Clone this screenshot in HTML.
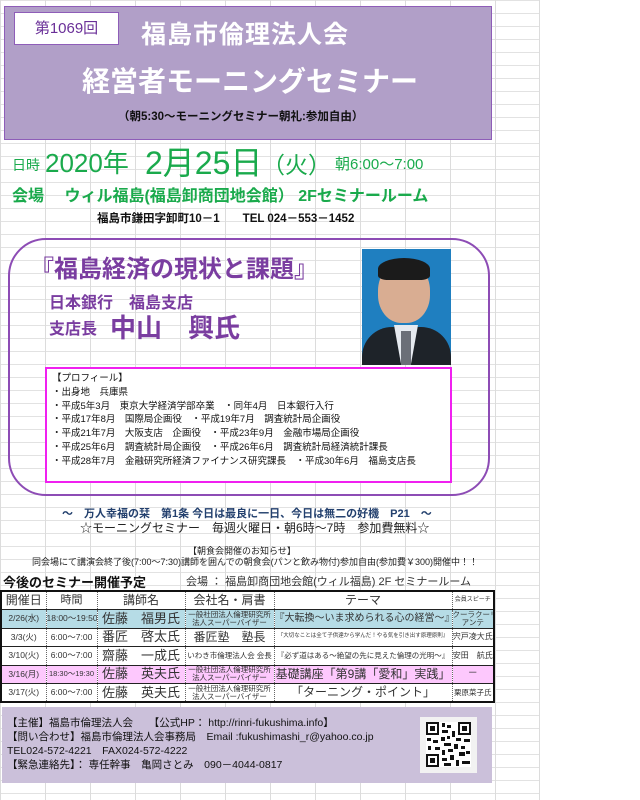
<!DOCTYPE html>
<html><head><meta charset="utf-8">
<style>
*{margin:0;padding:0;box-sizing:border-box}
body{width:640px;height:800px;position:relative;overflow:hidden;background:#fff;font-family:"Liberation Sans","Noto Sans CJK JP",sans-serif;}
.grid{position:absolute;left:0;top:0;width:540px;height:800px;
background-image:linear-gradient(to right,#dcdcdc 1px,transparent 1px),linear-gradient(to bottom,#e2e2e2 1px,transparent 1px);
background-size:45px 100%,100% 13px;border-right:1px solid #dcdcdc}
.a{position:absolute;white-space:nowrap}
.g{color:#1aaa4c}
.p{color:#7a3da0;font-weight:bold}
table{position:absolute;left:0;top:590px;width:493px;table-layout:fixed;border-collapse:collapse;border:2px solid #111;font-size:10px;color:#333;background:#fff}
td{border-left:1px dotted #666;border-bottom:1px solid #222;text-align:center;height:18.5px;line-height:1.05;padding:0;overflow:hidden;white-space:nowrap}
td.s{font-size:7.5px}
td.n{font-size:13px}
</style></head><body>
<div class="grid"></div>

<div class="a" style="left:4px;top:6px;width:488px;height:134px;background:#b19fc8;border:1px solid #8e5db8"></div>
<div class="a" style="left:14px;top:12px;width:105px;height:33px;background:#fff;border:1px solid #8e5db8;color:#6a2f98;font-size:15px;text-align:center;line-height:31px">第1069回</div>
<div class="a" style="left:141px;top:15px;color:#fff;font-size:25px;font-weight:bold;letter-spacing:1px">福島市倫理法人会</div>
<div class="a" style="left:82px;top:60px;color:#fff;font-size:28px;font-weight:bold">経営者モーニングセミナー</div>
<div class="a" style="left:118px;top:108px;color:#111;font-size:11.5px;font-weight:bold">（朝5:30～モーニングセミナー朝礼:参加自由）</div>

<div class="a g" style="left:12px;top:155px;font-size:14px">日時</div>
<div class="a g" style="left:45px;top:143px;font-size:26px">2020年</div>
<div class="a g" style="left:145px;top:138px;font-size:32px">2月25日</div>
<div class="a g" style="left:262px;top:146px;font-size:23px">（火）</div>
<div class="a g" style="left:335px;top:153px;font-size:15px">朝6:00～7:00</div>
<div class="a g" style="left:12px;top:182px;font-size:16px;font-weight:bold">会場　 ウィル福島(福島卸商団地会館） 2Fセミナールーム</div>
<div class="a" style="left:97px;top:210px;font-size:11.5px;font-weight:bold;color:#111">福島市鎌田字卸町10－1　　TEL 024－553－1452</div>

<div class="a" style="left:8px;top:238px;width:482px;height:258px;border:2px solid #8d4cb5;border-radius:38px"></div>
<div class="a p" style="left:30px;top:249px;font-size:24px">『福島経済の現状と課題』</div>
<div class="a p" style="left:49px;top:289px;font-size:16px">日本銀行　福島支店</div>
<div class="a p" style="left:49px;top:315px;font-size:16px">支店長</div>
<div class="a p" style="left:110px;top:308px;font-size:26px">中山　興氏</div>
<div class="a" style="left:362px;top:249px;width:89px;height:116px;background:#1f7fc0;overflow:hidden">
<div style="position:absolute;left:16px;top:12px;width:52px;height:62px;background:#d9ad92;border-radius:48% 48% 45% 45%"></div>
<div style="position:absolute;left:16px;top:9px;width:52px;height:22px;background:#1b1b1b;border-radius:50% 50% 20% 20%"></div>
<div style="position:absolute;left:0;top:78px;width:89px;height:40px;background:#1e2329;border-radius:30px 30px 0 0"></div>
<div style="position:absolute;left:32px;top:76px;width:24px;height:40px;background:#e6eaf0;clip-path:polygon(0 0,100% 0,70% 100%,30% 100%)"></div>
<div style="position:absolute;left:39px;top:82px;width:10px;height:34px;background:#6b6f78"></div>
</div>
<div class="a" style="left:45px;top:367px;width:407px;height:116px;border:2px solid #f020f0;background:#fff"></div>
<div class="a" style="left:52px;top:372px;font-size:9.5px;line-height:13.8px;color:#111">【プロフィール】<br>・出身地　兵庫県<br>・平成5年3月　東京大学経済学部卒業　・同年4月　日本銀行入行<br>・平成17年8月　国際局企画役　・平成19年7月　調査統計局企画役<br>・平成21年7月　大阪支店　企画役　・平成23年9月　金融市場局企画役<br>・平成25年6月　調査統計局企画役　・平成26年6月　調査統計局経済統計課長<br>・平成28年7月　金融研究所経済ファイナンス研究課長　・平成30年6月　福島支店長</div>

<div class="a" style="left:62px;top:505px;font-size:11px;font-weight:bold;color:#23406e">～　万人幸福の栞　第1条 今日は最良に一日、今日は無二の好機　P21　～</div>
<div class="a" style="left:80px;top:519px;font-size:12px;color:#222">☆モーニングセミナー　毎週火曜日・朝6時～7時　参加費無料☆</div>
<div class="a" style="left:188px;top:544px;font-size:9px;color:#222">【朝食会開催のお知らせ】</div>
<div class="a" style="left:32px;top:555px;font-size:9px;color:#222">同会場にて講演会終了後(7:00～7:30)講師を囲んでの朝食会(パンと飲み物付)参加自由(参加費￥300)開催中！！</div>
<div class="a" style="left:3px;top:576px;font-size:13px;line-height:14px;font-weight:bold;color:#111">今後のセミナー開催予定</div>
<div class="a" style="left:186px;top:576px;font-size:11px;line-height:13px;color:#333">会場 ： 福島卸商団地会館(ウィル福島) 2F セミナールーム</div>

<table>
<colgroup><col style="width:45px"><col style="width:51px"><col style="width:88px"><col style="width:89px"><col style="width:178px"><col style="width:42px"></colgroup>
<tr><td style="font-size:12px;border-left:none">開催日</td><td style="font-size:11px">時間</td><td style="font-size:12px">講師名</td><td style="font-size:12px">会社名・肩書</td><td style="font-size:12px">テーマ</td><td style="font-size:6px">会員スピーチ</td></tr>
<tr style="background:#b6dce6"><td style="border-left:none;font-size:8.5px">2/26(水)</td><td style="font-size:8.5px">18:00～19:50</td><td class="n">佐藤　福男氏</td><td class="s">一般社団法人倫理研究所<br>法人スーパーバイザー</td><td style="font-size:10px">『大転換～いま求められる心の経営～』</td><td class="s">クーラクーリ<br>アンテ</td></tr>
<tr><td style="border-left:none;font-size:8.5px">3/3(火)</td><td style="font-size:8.5px">6:00～7:00</td><td class="n">番匠　啓太氏</td><td style="font-size:12px">番匠塾　塾長</td><td style="font-size:5.5px">『大切なことは全て子供達から学んだ！やる気を引き出す原理原則』</td><td style="font-size:8px">宍戸凌大氏</td></tr>
<tr><td style="border-left:none;font-size:8.5px">3/10(火)</td><td style="font-size:8.5px">6:00～7:00</td><td class="n">齋藤　一成氏</td><td style="font-size:7.5px">いわき市倫理法人会 会長</td><td style="font-size:7.5px">『必ず道はある～絶望の先に見えた倫理の光明～』</td><td style="font-size:8px">安田　航氏</td></tr>
<tr style="background:#fdc8fd"><td style="border-left:none;font-size:8.5px">3/16(月)</td><td style="font-size:7.5px">18:30～19:30</td><td class="n">佐藤　英夫氏</td><td class="s">一般社団法人倫理研究所<br>法人スーパーバイザー</td><td style="font-size:12px">基礎講座「第9講「愛和」実践」</td><td>－</td></tr>
<tr><td style="border-left:none;font-size:8.5px">3/17(火)</td><td style="font-size:8.5px">6:00～7:00</td><td class="n">佐藤　英夫氏</td><td class="s">一般社団法人倫理研究所<br>法人スーパーバイザー</td><td style="font-size:12px">「ターニング・ポイント」</td><td style="font-size:7.5px">栗原菜子氏</td></tr>
</table>

<div class="a" style="left:2px;top:707px;width:490px;height:76px;background:#cbc0da"></div>
<div class="a" style="left:7px;top:716px;font-size:10.5px;line-height:14px;color:#111">【主催】福島市倫理法人会　　【公式HP： http://rinri-fukushima.info】<br>【問い合わせ】福島市倫理法人会事務局　Email :fukushimashi_r@yahoo.co.jp<br>TEL024-572-4221　FAX024-572-4222<br>【緊急連絡先】： 専任幹事　亀岡さとみ　090－4044-0817</div>
<div class="a" style="left:420px;top:717px;width:57px;height:56px;background:#f2f2f2"></div>
<svg class="a" style="left:426px;top:722px" width="45" height="45" viewBox="0 0 45 45">
<rect width="45" height="45" fill="#fff"/>
<g fill="#111"><path d="M0 0h13v13H0zM32 0h13v13H32zM0 32h13v13H0z"/></g>
<g fill="#fff"><path d="M2 2h9v9H2zM34 2h9v9h-9zM2 34h9v9H2z"/></g>
<g fill="#111"><path d="M4 4h5v5H4zM36 4h5v5h-5zM4 36h5v5H4z"/>
<path d="M16 1h3v4h-3zM21 3h4v3h-4zM16 8h6v3h-6zM26 9h3v6h-3zM15 15h4v4h-4zM21 14h3v3h-3zM1 16h4v3H1zM7 18h5v3H7zM30 16h5v3h-5zM38 17h6v3h-6zM18 21h7v3h-7zM2 24h3v4H2zM9 25h5v3H9zM28 22h4v5h-4zM35 24h4v3h-4zM16 28h3v5h-3zM22 27h5v3h-5zM33 30h6v4h-6zM40 29h4v3h-4zM16 36h5v3h-5zM24 33h4v5h-4zM30 38h3v6h-3zM36 39h8v3h-8zM18 41h7v3h-7z"/></g>
</svg>
</body></html>
